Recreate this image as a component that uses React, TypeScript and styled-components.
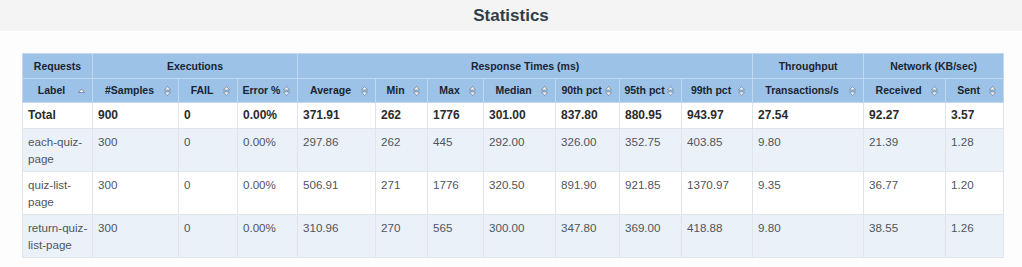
import React from "react";
import styled, { createGlobalStyle } from "styled-components";

const GlobalStyle = createGlobalStyle`
  html, body { margin: 0; padding: 0; background: #fdfdfd; }
  body { font-family: "Liberation Sans", Arial, sans-serif; }
`;

const Page = styled.div`
  width: 1022px;
  height: 267px;
  overflow: hidden;
  background: #fdfdfd;
`;

const Heading = styled.div`
  height: 31px;
  background: #f4f4f4;
  display: flex;
  align-items: center;
  justify-content: center;
`;

const Title = styled.h2`
  margin: 0;
  font-family: "Liberation Sans", Arial, sans-serif;
  font-size: 17px;
  font-weight: bold;
  color: #2f3e46;
  line-height: 31px;
`;

const Body = styled.div`
  padding: 22px 19px 0 22px;
`;

const Table = styled.table`
  width: 981px;
  table-layout: fixed;
  border-collapse: collapse;
  font-family: "Liberation Sans", Arial, sans-serif;
`;

const GroupCell = styled.th`
  background: #9dc2e8;
  color: #1a2530;
  font-size: 10.5px;
  font-weight: bold;
  line-height: 16px;
  padding: 4px;
  text-align: center;
  border: 1px solid #c3d8ee;
  white-space: nowrap;
`;

const HeadCell = styled.th`
  position: relative;
  background: #9dc2e8;
  color: #1a2530;
  font-size: 10.5px;
  font-weight: bold;
  line-height: 15px;
  padding: 4px 16px 4px 4px;
  text-align: center;
  border: 1px solid #c3d8ee;
  white-space: nowrap;
`;

const SortIcon = styled.svg`
  position: absolute;
  right: 7px;
  top: 50%;
  transform: translateY(-50%);
`;

const Row = styled.tr<{ $striped?: boolean }>`
  background: ${(p) => (p.$striped ? "#eaf1f9" : "#ffffff")};
`;

const Cell = styled.td<{ $bold?: boolean }>`
  font-size: ${(p) => (p.$bold ? "12px" : "11.6px")};
  font-weight: ${(p) => (p.$bold ? "bold" : "normal")};
  color: ${(p) => (p.$bold ? "#2b2b2b" : "#50555b")};
  line-height: 17px;
  padding: 4px 4px 4px 5px;
  vertical-align: top;
  text-align: left;
  border: 1px solid #e0e5eb;
  word-wrap: break-word;
`;

const widths = [70, 86, 59, 60, 78, 52, 56, 72, 64, 62, 71, 111, 82, 58];

const columns = [
  "Label",
  "#Samples",
  "FAIL",
  "Error %",
  "Average",
  "Min",
  "Max",
  "Median",
  "90th pct",
  "95th pct",
  "99th pct",
  "Transactions/s",
  "Received",
  "Sent",
];

const rows: string[][] = [
  ["Total", "900", "0", "0.00%", "371.91", "262", "1776", "301.00", "837.80", "880.95", "943.97", "27.54", "92.27", "3.57"],
  ["each-quiz-page", "300", "0", "0.00%", "297.86", "262", "445", "292.00", "326.00", "352.75", "403.85", "9.80", "21.39", "1.28"],
  ["quiz-list-page", "300", "0", "0.00%", "506.91", "271", "1776", "320.50", "891.90", "921.85", "1370.97", "9.35", "36.77", "1.20"],
  ["return-quiz-list-page", "300", "0", "0.00%", "310.96", "270", "565", "300.00", "347.80", "369.00", "418.88", "9.80", "38.55", "1.26"],
];

const BothArrows = () => (
  <SortIcon width="7" height="10" viewBox="0 0 7 10">
    <polygon points="3.5,0.5 6.5,4 0.5,4" fill="#f4f7fb" stroke="#5d6d7e" strokeWidth="0.6" />
    <polygon points="0.5,6 6.5,6 3.5,9.5" fill="#f4f7fb" stroke="#5d6d7e" strokeWidth="0.6" />
  </SortIcon>
);

const UpArrow = () => (
  <SortIcon width="7" height="6" viewBox="0 0 7 6">
    <polygon points="3.5,1 6.5,4.5 0.5,4.5" fill="#f4f7fb" stroke="#4d5d6e" strokeWidth="0.6" />
  </SortIcon>
);

const groups: [string, number][] = [
  ["Requests", 1],
  ["Executions", 3],
  ["Response Times (ms)", 7],
  ["Throughput", 1],
  ["Network (KB/sec)", 2],
];

export default function App() {
  return (
    <>
      <GlobalStyle />
      <Page>
        <Heading>
          <Title>Statistics</Title>
        </Heading>
        <Body>
          <Table>
            <colgroup>
              {widths.map((w, i) => (
                <col key={i} style={{ width: w }} />
              ))}
            </colgroup>
            <thead>
              <tr>
                {groups.map(([g, span]) => (
                  <GroupCell key={g} colSpan={span}>
                    {g}
                  </GroupCell>
                ))}
              </tr>
              <tr>
                {columns.map((c, i) => (
                  <HeadCell key={c}>
                    {c}
                    {i === 0 ? <UpArrow /> : <BothArrows />}
                  </HeadCell>
                ))}
              </tr>
            </thead>
            <tbody>
              {rows.map((r, ri) => (
                <Row key={r[0]} $striped={ri % 2 === 1}>
                  {r.map((v, ci) => (
                    <Cell key={ci} $bold={ri === 0}>
                      {v}
                    </Cell>
                  ))}
                </Row>
              ))}
            </tbody>
          </Table>
        </Body>
      </Page>
    </>
  );
}
